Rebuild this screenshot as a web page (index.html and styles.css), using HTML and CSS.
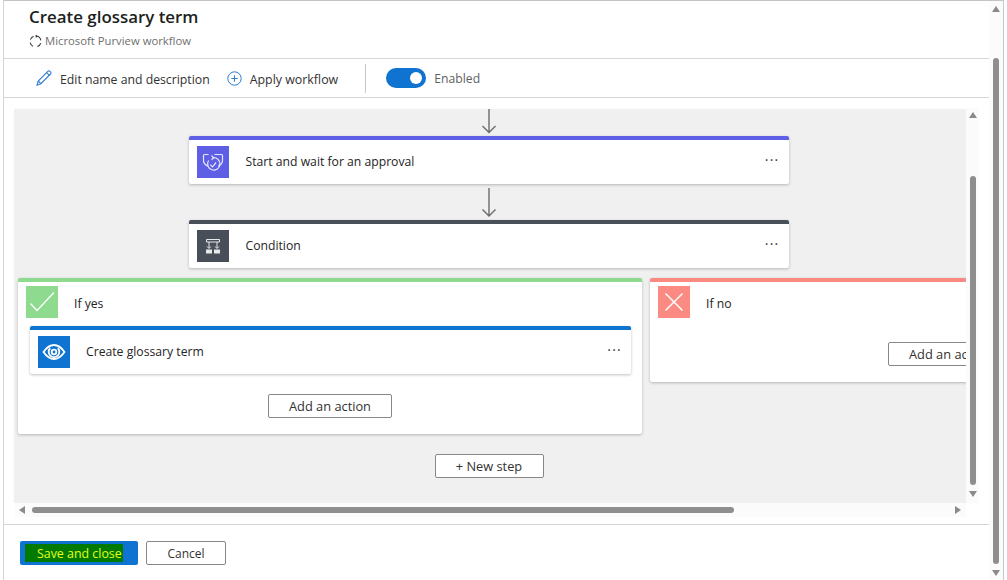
FILE: index.html
```html
<!DOCTYPE html>
<html lang="en">
<head>
  <meta charset="UTF-8">
  <meta name="viewport" content="width=device-width, initial-scale=1.0">
  <title>Create glossary term</title>
  <link rel="stylesheet" href="styles.css">
</head>
<body>

<div class="panel">
  <div class="main">
    <div class="header">
      <h1>Create glossary term</h1>
      <div class="subtitle">
        <svg width="13" height="13" viewBox="0 0 14 14" fill="none" stroke="#333" stroke-width="1.100"><path d="M5 1.400A5.800 5.800 0 0 0 1.500 5M1.300 8.200a5.800 5.800 0 0 0 3 4M9 12.500a5.800 5.800 0 0 0 3.600-3.600M12.800 5.800A5.800 5.800 0 0 0 7.300 1.200"/><path d="M7.300 .2 8.500 1.300 7.300 2.500"/></svg>
        Microsoft Purview workflow
      </div>
    </div>

    <div class="toolbar">
      <button class="tool tool-edit">
        <svg width="18" height="18" viewBox="0 0 18 18" fill="none" stroke="#2f7fd1" stroke-width="1.100"><path d="M2 16.200 3.200 12 12.800 2.400a1.500 1.500 0 0 1 2.300 0l.4.4a1.500 1.500 0 0 1 0 2.200L5.900 14.700Z"/><path d="M3.200 12 5.900 14.700M11.600 3.600l2.800 2.800"/></svg>
        Edit name and description
      </button>
      <button class="tool tool-apply">
        <svg width="15" height="15" viewBox="0 0 15 15" fill="none" stroke="#2f7fd1" stroke-width="1"><circle cx="7.500" cy="7.500" r="6.700"/><path d="M7.500 4.300v6.400M4.300 7.500h6.400"/></svg>
        Apply workflow
      </button>
      <div class="divider"></div>
      <div class="toggle"><span class="knob"></span></div>
      <span class="toggle-label">Enabled</span>
    </div>

    <div class="designer">
      <div class="canvas">
        <div class="flow">
          <svg class="arrow arrow-top" width="16" height="25" viewBox="0 0 16 25" fill="none" stroke="#6b6b6b" stroke-width="1.400"><path d="M8 0v23.500M1.500 17 8 23.500l6.500-6.500"/></svg>

          <div class="card card-approval">
            <div class="icon icon-approval">
              <svg width="32" height="32" viewBox="0 0 32 32" fill="none" stroke="#e6e6fc" stroke-width="1.200"><path d="M11.500 8.500H7.500a1 1 0 0 0-1 1v5c0 2.500 1.500 4.300 4.300 5.600M17.500 8.500h7a1 1 0 0 1 1 1v5c0 2.500-1.500 4.300-4.300 5.600"/><path d="M11.600 14.500a6.200 6.200 0 1 0 4-2.700"/><path d="M14.500 9.500l2.200 2.200-2.200 2.200"/><path d="M13.300 18.600l2.200 2.200 3.600-4.300"/></svg>
            </div>
            <span class="card-title">Start and wait for an approval</span>
            <span class="dots">&middot;&middot;&middot;</span>
          </div>

          <svg class="arrow arrow-mid" width="16" height="30" viewBox="0 0 16 30" fill="none" stroke="#6b6b6b" stroke-width="1.400"><path d="M8 0v28M1.500 21.500 8 28l6.500-6.500"/></svg>

          <div class="card card-condition">
            <div class="icon icon-condition">
              <svg width="32" height="32" viewBox="0 0 32 32" fill="none" stroke="#e8e9ea" stroke-width="1"><path d="M9.500 9.500h13v2.500h-13zM12 12v6M20 12v6"/><path d="M10 16.500l2 2 2-2M18 16.500l2 2 2-2"/><path d="M9 19.500h6v4H9zM17 19.500h6v4h-6z" fill="#e8e9ea" stroke="none"/></svg>
            </div>
            <span class="card-title">Condition</span>
            <span class="dots">&middot;&middot;&middot;</span>
          </div>

          <div class="branches">
            <div class="branch branch-yes">
              <div class="branch-head">
                <div class="icon icon-yes">
                  <svg width="32" height="32" viewBox="0 0 32 32" fill="none" stroke="#fff" stroke-width="1.300"><path d="M4.500 17.500 11 24.500 28 6.500"/></svg>
                </div>
                <span class="card-title">If yes</span>
              </div>
              <div class="card card-glossary">
                <div class="icon icon-glossary">
                  <svg width="32" height="32" viewBox="0 0 32 32" fill="none" stroke="#fff" stroke-width="1.800"><path d="M5.500 16C9 11 12.500 9 16 9s7 2 10.500 7c-3.500 5-7 7-10.500 7S9 21 5.500 16Z"/><path d="M12.200 12.200a5.300 5.300 0 1 0 7.600 0"/><circle cx="16" cy="16" r="2.300"/></svg>
                </div>
                <span class="card-title">Create glossary term</span>
                <span class="dots">&middot;&middot;&middot;</span>
              </div>
              <button class="btn btn-add">Add an action</button>
            </div>

            <div class="branch branch-no">
              <div class="branch-head">
                <div class="icon icon-no">
                  <svg width="32" height="32" viewBox="0 0 32 32" fill="none" stroke="#fff" stroke-width="1.500"><path d="M7.500 7.500l17 17M24.500 7.500l-17 17"/></svg>
                </div>
                <span class="card-title">If no</span>
              </div>
              <button class="btn btn-add btn-add-no">Add an action</button>
            </div>
          </div>

          <button class="btn btn-new">+ New step</button>
        </div>
      </div>

      <div class="vscroll inner-v">
        <span class="arr arr-up"></span>
        <span class="thumb-v"></span>
        <span class="arr arr-down"></span>
      </div>

      <div class="hscroll">
        <span class="arr arr-left"></span>
        <span class="thumb-h"></span>
        <span class="arr arr-right"></span>
      </div>
    </div>

    <div class="footer">
      <button class="btn-save"><span class="highlight">Save and close</span></button>
      <button class="btn btn-cancel">Cancel</button>
    </div>
  </div>

  <div class="vscroll outer-v">
    <span class="arr arr-up"></span>
    <span class="thumb-v"></span>
    <span class="arr arr-down"></span>
  </div>
</div>

</body>
</html>
```

FILE: styles.css
```css
* {
  box-sizing: border-box;
}

html, body {
  margin: 0;
  padding: 0;
  height: 100%;
  overflow: hidden;
  background: #fff;
}

body {
  font-family: 'Open Sans', 'Noto Sans', Arial, sans-serif;
  font-size: 12px;
  color: #252423;
}

button {
  font-family: inherit;
}

.panel {
  width: 1001px;
  height: 580px;
  margin-left: 3px;
  border-left: 1px solid #d4d4d4;
  border-top: 1px solid #c4c4c4;
  border-right: 1px solid #c8c8c8;
  display: flex;
}

.main {
  width: 986px;
  display: flex;
  flex-direction: column;
}

/* header */
.header {
  height: 58px;
  padding: 5px 0 0 25px;
  border-bottom: 1px solid #d6d6d6;
}

h1 {
  margin: 0;
  font-size: 16.9px;
  line-height: 22px;
  font-weight: 600;
  color: #201f1e;
}

.subtitle {
  display: flex;
  align-items: center;
  gap: 3px;
  margin-top: 6px;
  font-size: 11.3px;
  line-height: 14px;
  color: #6f6f6f;
}

/* toolbar */
.toolbar {
  height: 39px;
  display: flex;
  align-items: center;
  border-bottom: 1px solid #d6d6d6;
}

.tool {
  display: flex;
  align-items: center;
  padding: 2px 0 0;
  border: none;
  background: none;
  font-size: 12.25px;
  color: #323130;
}

.tool svg {
  margin-top: -2px;
}

.tool-edit {
  margin-left: 31px;
  gap: 7px;
}

.tool-apply {
  margin-left: 17px;
  gap: 8px;
  font-size: 12.4px;
}

.divider {
  width: 1px;
  height: 29px;
  margin-left: 27px;
  background: #c8c8c8;
}

.toggle {
  width: 40px;
  height: 20px;
  margin-left: 20px;
  padding: 0 4px;
  border-radius: 10px;
  background: #0f74d1;
  display: flex;
  align-items: center;
  justify-content: flex-end;
}

.knob {
  width: 12px;
  height: 12px;
  border-radius: 50%;
  background: #fff;
}

.toggle-label {
  margin-left: 8px;
  color: #5f5f5f;
  font-size: 12.2px;
}

/* designer */
.designer {
  height: 427px;
  padding: 11px 0 0 11px;
  display: grid;
  grid-template-columns: 951px 13px;
  grid-template-rows: 394px 14px;
  border-bottom: 1px solid #d6d6d6;
}

.canvas {
  background: #f0f0f0;
  overflow: hidden;
  box-shadow: -1px 0 1px rgba(0, 0, 0, 0.06);
}

.flow {
  width: 947px;
  display: flex;
  flex-direction: column;
  align-items: center;
}

.arrow {
  display: block;
}

.arrow-top {
  margin-bottom: 2px;
}

.arrow-mid {
  margin: 4px 0 2px;
}

.card {
  width: 600px;
  flex: none;
  height: 48px;
  padding: 4px 8px;
  display: flex;
  align-items: center;
  background: #fff;
  border-top: 4px solid;
  border-radius: 2px;
  box-shadow: 0 1px 3px rgba(0, 0, 0, 0.25);
}

.card-approval {
  border-top-color: #5f5fe6;
}

.card-condition {
  border-top-color: #484f58;
}

.card-glossary {
  width: 601px;
  margin-left: 12px;
  border-top-color: #0f74d1;
}

.icon {
  width: 32px;
  height: 32px;
  flex: none;
  display: flex;
  align-items: center;
  justify-content: center;
}

.icon-approval {
  background: #5f5fe6;
}

.icon-condition {
  background: #484f58;
}

.icon-glossary {
  background: #0f74d1;
}

.icon-yes {
  background: #8edb90;
}

.icon-no {
  background: #fb8a83;
}

.card-title {
  margin-left: 16px;
  margin-top: -2px;
  font-size: 12.2px;
  color: #252423;
}

.card-approval .card-title,
.card-condition .card-title {
  margin-left: 17px;
}

.branch-head .card-title {
  margin-top: 3px;
}

.dots {
  margin-left: auto;
  margin-right: 1px;
  margin-top: -6px;
  font-size: 14px;
  letter-spacing: 1.2px;
  color: #333;
}

/* branches */
.branches {
  align-self: flex-start;
  margin: 10px 0 0 3px;
  display: flex;
  align-items: flex-start;
  gap: 8px;
}

.branch {
  flex: none;
  display: flex;
  flex-direction: column;
  background: #fff;
  border-top: 4px solid;
  border-radius: 2px;
  box-shadow: 0 1px 3px rgba(0, 0, 0, 0.25);
}

.branch-yes {
  width: 624px;
  height: 156px;
  border-top-color: #8edb90;
}

.branch-no {
  width: 600px;
  height: 104px;
  border-top-color: #fb8a83;
}

.branch-head {
  height: 44px;
  padding: 4px 8px 8px;
  display: flex;
  align-items: center;
}

.btn {
  height: 24px;
  padding: 0;
  background: #fff;
  border: 1px solid #8a8886;
  border-radius: 2px;
  font-size: 12.8px;
  color: #323130;
}

.btn-add {
  width: 124px;
  align-self: center;
  margin-top: 20px;
}

.btn-add-no {
  margin-top: 16px;
}

.btn-new {
  width: 109px;
  margin: 20px 0 0 1px;
}

/* scrollbars */
.vscroll {
  width: 13px;
  display: flex;
  flex-direction: column;
  align-items: center;
  background: #fbfbfb;
}

.outer-v {
  width: 14px;
  padding-top: 5px;
}

.inner-v {
  padding-top: 4px;
  margin-top: -1px;
}

.hscroll {
  grid-column: 1;
  padding: 0 5px 0 4px;
  display: flex;
  align-items: center;
  background: #fbfbfb;
}

.arr {
  display: block;
  width: 0;
  height: 0;
  flex: none;
  border-style: solid;
  border-color: transparent;
}

.arr-up {
  border-width: 0 4px 6px;
  border-bottom-color: #8a8a8a;
}

.arr-down {
  border-width: 6px 4px 0;
  border-top-color: #8a8a8a;
}

.arr-left {
  border-width: 4px 6px 4px 0;
  border-right-color: #8a8a8a;
}

.arr-right {
  border-width: 4px 0 4px 6px;
  border-left-color: #8a8a8a;
  margin-left: auto;
}

.thumb-v {
  width: 6px;
  border-radius: 3px;
  background: #8e8e8e;
}

.inner-v .thumb-v {
  height: 309px;
  margin: 58px 0 6px;
}

.outer-v .thumb-v {
  height: 506px;
  margin: 46px 0 6px;
}

.thumb-h {
  width: 702px;
  height: 6px;
  margin-left: 7px;
  border-radius: 3px;
  background: #8e8e8e;
}

/* footer */
.footer {
  padding-top: 16px;
  padding-left: 16px;
  display: flex;
  align-items: flex-start;
  gap: 8px;
}

.btn-save {
  width: 118px;
  height: 24px;
  padding: 0 0 0 5px;
  display: flex;
  align-items: center;
  background: #0f74d1;
  border: none;
  border-radius: 2px;
  font-size: 12.4px;
}

.highlight {
  padding: 1px 1px 0 12px;
  line-height: 17px;
  background: #007a00;
  color: #e6ff1f;
}

.btn-cancel {
  width: 80px;
  font-size: 12px;
}
```
